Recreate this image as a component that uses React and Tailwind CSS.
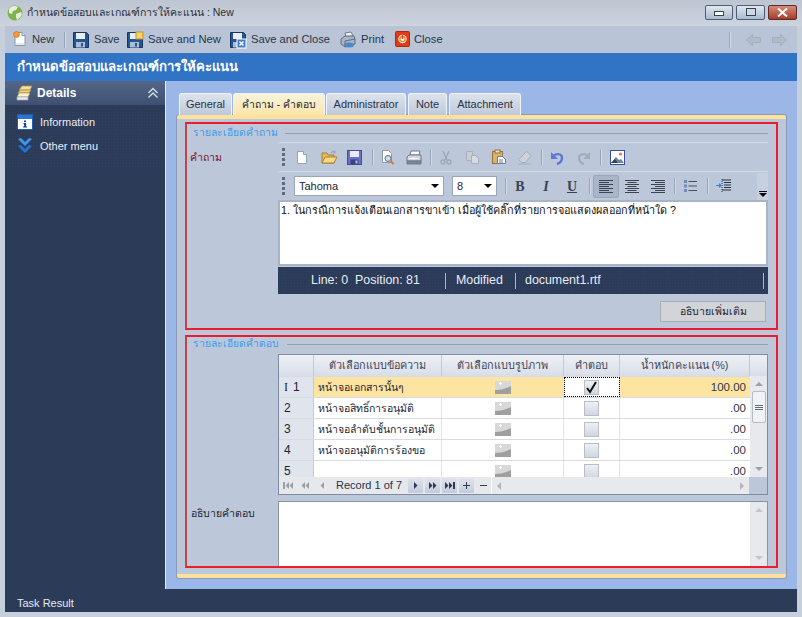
const font = "font-['Liberation_Sans','Noto_Sans',sans-serif]";

const Grip = () => (
  <div className="flex flex-col gap-[2px] w-[3px]">
    <div className="w-[3px] h-[3px] bg-[#5c6b82]" />
    <div className="w-[3px] h-[3px] bg-[#5c6b82]" />
    <div className="w-[3px] h-[3px] bg-[#5c6b82]" />
    <div className="w-[3px] h-[3px] bg-[#5c6b82]" />
  </div>
);

const Sep = ({ className = "" }) => <div className={`w-px h-[16px] bg-[#98a5b8] border-r border-[#d3dbe6] box-content ${className}`} />;

const Doc = ({ spark }) => (
  <svg width="16" height="16" viewBox="0 0 16 16">
    <path d="M3 1.5h7l3 3v10H3z" fill="#fff" stroke="#8d97a8" />
    <path d="M10 1.5v3h3" fill="#dfe5ee" stroke="#8d97a8" />
    <path d="M4 13h8" stroke="#cdd5e2" />
    {spark && <circle cx="4.5" cy="3.5" r="3" fill="#f29a3c" stroke="#d96a1d" strokeWidth=".6" />}
  </svg>
);

const Floppy = ({ badge }) => (
  <svg width="18" height="18" viewBox="0 0 18 18">
    <path d="M1.5 1.5h13l2 2v13h-15z" fill="#27558f" stroke="#17365f" />
    <rect x="4" y="2" width="9" height="6" fill="#e9eef5" />
    <rect x="4" y="11" width="9" height="5.5" fill="#a9bdd6" />
    <rect x="9" y="12" width="2" height="3.5" fill="#27558f" />
    {badge === "new" && <rect x="10" y="1" width="7" height="7" fill="#f6d266" stroke="#c9912c" />}
    {badge === "close" && (
      <g>
        <rect x="8" y="8" width="9" height="9" fill="#3d7dc8" stroke="#fff" />
        <path d="M10.5 10.5l4 4m0-4l-4 4" stroke="#fff" strokeWidth="1.6" />
      </g>
    )}
  </svg>
);

const PrinterBig = () => (
  <svg width="18" height="18" viewBox="0 0 18 18">
    <path d="M6 2l6-1 2 4-7 1z" fill="#f2f5f9" stroke="#6f7c8f" />
    <path d="M2 8l4-3h9l1 3v5l-10 3-4-3z" fill="#aab5c5" stroke="#5f6b7d" />
    <path d="M6 16V10l10-2" fill="none" stroke="#5f6b7d" />
    <ellipse cx="10" cy="14" rx="5" ry="2.5" fill="#4a88c7" />
  </svg>
);

const PowerClose = () => (
  <svg width="15" height="16" viewBox="0 0 15 16">
    <rect x="0.5" y="0.5" width="14" height="15" rx="1" fill="#e03a17" stroke="#b5280c" />
    <circle cx="7.5" cy="8" r="4.2" fill="#fff" />
    <circle cx="7.5" cy="8" r="2.6" fill="none" stroke="#e8832a" strokeWidth="1.4" />
    <path d="M7.5 4v4" stroke="#e03a17" strokeWidth="1.4" />
  </svg>
);

const Globe = () => (
  <svg width="16" height="16" viewBox="0 0 16 16">
    <circle cx="8" cy="8" r="7.5" fill="#7fb24a" />
    <path d="M2 4c2-3 6-4 9-2l-2 3-3 1-1 3-3-1zM9 9l5-2 1 2c-1 3-3 5-5 6l-1-3z" fill="#e6efdb" />
  </svg>
);

const Chest = () => (
  <svg width="18" height="18" viewBox="0 0 18 18">
    <path d="M3 6l3-4h10l-2 4z" fill="#f6e09a" stroke="#a4905a" strokeWidth=".7" />
    <path d="M2 9l2-3h11l-2 3z" fill="#f1cf6d" stroke="#a4905a" strokeWidth=".7" />
    <path d="M1 13l2-4h11l-2 4z" fill="#fbf3cf" stroke="#a4905a" strokeWidth=".7" />
    <path d="M1 13h11v3H1z" fill="#e9edf3" stroke="#a0a8b5" strokeWidth=".7" />
  </svg>
);

const InfoIcon = () => (
  <svg width="16" height="16" viewBox="0 0 16 16">
    <rect x="0.5" y="0.5" width="15" height="15" fill="#fff" stroke="#1e5fb0" />
    <rect x="1" y="1" width="14" height="4" fill="#2a74cf" />
    <rect x="7" y="6.5" width="2" height="1.6" fill="#163f86" />
    <path d="M6.5 9h2.6v3.4h1v1h-4v-1h1v-2.4h-.6z" fill="#163f86" />
  </svg>
);

const DoubleDown = () => (
  <svg width="16" height="16" viewBox="0 0 16 16">
    <path d="M1 1l3-1 4 4 4-4 3 1-7 7z" fill="#3f97ee" />
    <path d="M1 8l3-1 4 4 4-4 3 1-7 7z" fill="#1f73d6" />
  </svg>
);

const DoubleUp = () => (
  <svg width="12" height="12" viewBox="0 0 12 12" fill="none" stroke="#d6deea" strokeWidth="1.4">
    <path d="M1.5 6l4.5-4.5 4.5 4.5" />
    <path d="M1.5 10.5l4.5-4.5 4.5 4.5" />
  </svg>
);

const Small = {
  doc: (
    <svg width="14" height="15" viewBox="0 0 14 15">
      <path d="M2.5 1.5h6l3 3v9h-9z" fill="#fff" stroke="#9aa3b2" />
      <path d="M8.5 1.5v3h3" fill="#d9dfe8" stroke="#9aa3b2" />
    </svg>
  ),
  open: (
    <svg width="17" height="15" viewBox="0 0 17 15">
      <path d="M1 3h5l1 2h6v8H1z" fill="#e6bb5e" stroke="#a87f2d" />
      <path d="M1 13l3-6h12l-3 6z" fill="#f6d98a" stroke="#a87f2d" />
      <path d="M10 3c1-2 3-2 4-1M14 0.5V3h-2" fill="none" stroke="#8fa3bd" />
    </svg>
  ),
  save: (
    <svg width="15" height="15" viewBox="0 0 15 15">
      <rect x="0.5" y="0.5" width="14" height="14" fill="#6a72c6" stroke="#454c97" />
      <rect x="3" y="1" width="9" height="6" fill="#e8ecf6" />
      <rect x="3.5" y="9.5" width="8" height="5" fill="#3b4284" />
      <rect x="8.5" y="10.5" width="2" height="3" fill="#b5bbe4" />
    </svg>
  ),
  preview: (
    <svg width="16" height="16" viewBox="0 0 16 16">
      <path d="M2.5 1.5h6l3 3v9h-9z" fill="#fff" stroke="#8f99a8" />
      <circle cx="8" cy="9.5" r="3" fill="#cfe0f1" stroke="#5f6b7d" />
      <path d="M10.5 12l3 3" stroke="#d27a2c" strokeWidth="2" />
    </svg>
  ),
  print: (
    <svg width="16" height="15" viewBox="0 0 16 15">
      <path d="M5 1h9l-1 4H4z" fill="#fff" stroke="#6e7786" />
      <path d="M1 7l2-2h12v6H1z" fill="#d3d8df" stroke="#6e7786" />
      <path d="M1 11h14v3H1z" fill="#7f8896" stroke="#6e7786" />
      <path d="M3 8.5h9" stroke="#fff" />
    </svg>
  ),
  cut: (
    <svg width="14" height="15" viewBox="0 0 14 15" fill="none" stroke="#9da6b3" strokeWidth="1.3">
      <path d="M4 1l4 9M10 1L6 10" />
      <circle cx="4" cy="12" r="2" />
      <circle cx="10" cy="12" r="2" />
    </svg>
  ),
  copy: (
    <svg width="15" height="15" viewBox="0 0 15 15">
      <path d="M1.5 1.5h6v9h-6z" fill="#c9ced6" stroke="#a9b0bb" />
      <path d="M6.5 5.5h4l3 3v5h-7z" fill="#d7dbe1" stroke="#a9b0bb" />
    </svg>
  ),
  paste: (
    <svg width="16" height="16" viewBox="0 0 16 16">
      <rect x="1.5" y="2.5" width="10" height="12" fill="#d9b46a" stroke="#92733a" />
      <rect x="4" y="1" width="5" height="3" fill="#e8e2cf" stroke="#92733a" />
      <path d="M6.5 7.5h5l3 3v4h-8z" fill="#fff" stroke="#6f7c8f" />
      <path d="M8 11h4M8 13h4" stroke="#6f7c8f" />
    </svg>
  ),
  eraser: (
    <svg width="16" height="15" viewBox="0 0 16 15">
      <path d="M9.5 1.5l5 4-6 7h-4l-3-3z" fill="#cdd2d9" stroke="#a6adb8" />
      <path d="M1 14h13" stroke="#a6adb8" />
    </svg>
  ),
  undo: (
    <svg width="14" height="15" viewBox="0 0 14 15" fill="none">
      <path d="M3 7c2-4 9-4 9 1 0 3-2 5-5 6" stroke="#5c78d6" strokeWidth="2.4" />
      <path d="M1 2v7h7z" fill="#5c78d6" />
    </svg>
  ),
  redo: (
    <svg width="14" height="15" viewBox="0 0 14 15" fill="none">
      <path d="M11 7C9 3 2 3 2 8c0 3 2 5 5 6" stroke="#a3acb9" strokeWidth="2.4" />
      <path d="M13 2v7H6z" fill="#a3acb9" />
    </svg>
  ),
  image: (
    <svg width="15" height="15" viewBox="0 0 15 15">
      <rect x="0.5" y="0.5" width="14" height="14" fill="#fff" stroke="#3c4f9b" />
      <circle cx="10.5" cy="4" r="1.6" fill="#ec7b35" />
      <path d="M1 13l5-6 3 3 2-1 3 4z" fill="#6d83a8" />
      <path d="M1 13l4-4 3 4z" fill="#33415f" />
    </svg>
  ),
  list: (
    <svg width="14" height="14" viewBox="0 0 14 14">
      <rect x="1" y="1" width="3" height="3" fill="#7487b8" />
      <rect x="1" y="5.5" width="3" height="3" fill="#7487b8" />
      <rect x="1" y="10" width="3" height="3" fill="#7487b8" />
      <path d="M5.5 2.5H14M5.5 7H14M5.5 11.5H14" stroke="#4a5361" />
    </svg>
  ),
  indent: (
    <svg width="16" height="14" viewBox="0 0 16 14">
      <path d="M6 1h9M8 3.500h7M8 6h7M8 8.500h7M6 11h9" stroke="#2b3340" />
      <path d="M6 0v14" stroke="#2b3340" strokeDasharray="1 1" />
      <path d="M0 6h3V4l3 2.500L3 9V7H0z" fill="#3c7fdc" />
    </svg>
  ),
};

const Align = ({ kind }) => {
  const short = { left: ["M0 3.500h10", "M0 7.500h10", "M0 11.500h10"], center: ["M2.500 3.500h9", "M2.500 7.500h9", "M2.500 11.500h9"], right: ["M4 3.500h10", "M4 7.500h10", "M4 11.500h10"] }[kind];
  return (
    <svg width="14" height="14" viewBox="0 0 14 14" stroke="#3c434f">
      <path d="M0 1.500h14M0 5.500h14M0 9.500h14M0 13.500h14" />
      {short.map((d) => (
        <path key={d} d={d} />
      ))}
    </svg>
  );
};

const Caret = ({ className = "" }) => (
  <div className={`w-0 h-0 border-x-[4px] border-x-transparent border-t-[4px] border-t-black ${className}`} />
);

const ToolItem = ({ icon, label, labelClass = "", className = "" }) => (
  <div className={`flex items-center gap-[4px] text-[11.200px] text-[#27344a] ${className}`}>
    {icon}
    <span className={`whitespace-nowrap ${labelClass}`}>{label}</span>
  </div>
);

const Tab = ({ label, active, className = "" }) => (
  <div
    className={`h-[22px] flex items-center justify-center rounded-t-[3px] border border-b-0 border-[#f0f4fa] ${
      active ? "bg-gradient-to-b from-[#f7f3dd] to-[#fde5a6] text-[#1c2534]" : "bg-gradient-to-b from-[#dde3ec] to-[#bfc9d9] text-[#27344a]"
    } ${className}`}
  >
    {label}
  </div>
);

const PicCell = () => (
  <svg width="16" height="13" viewBox="0 0 16 13">
    <rect width="16" height="13" fill="#d8d8d8" />
    <path d="M0 13V9c5 0 11-1 16-4v8z" fill="#9f9f9f" />
    <rect x="4" y="2" width="3" height="1" fill="#fff" />
    <rect x="5" y="1" width="1" height="3" fill="#fff" />
  </svg>
);

const Check = ({ checked }) => (
  <div className="w-[15px] h-[15px] border border-[#b9bec6] bg-gradient-to-b from-[#eef0f4] to-[#cfd6e3] flex items-center justify-center">
    {checked && (
      <svg width="13" height="13" viewBox="0 0 13 13" fill="none" stroke="#111" strokeWidth="2">
        <path d="M2 7l3 4 6-10" />
      </svg>
    )}
  </div>
);

const rows = [
  { no: "1", text: "หน้าจอเอกสารนั้นๆ", score: "100.00", on: true },
  { no: "2", text: "หน้าจอสิทธิ์การอนุมัติ", score: ".00" },
  { no: "3", text: "หน้าจอลำดับชั้นการอนุมัติ", score: ".00" },
  { no: "4", text: "หน้าจออนุมัติการร้องขอ", score: ".00" },
  { no: "5", text: "", score: ".00" },
];

const NavBtn = ({ d, active, dark, className = "" }) => (
  <div className={`h-[15px] flex items-center justify-center rounded-[1px] ${active ? "w-[15px] bg-gradient-to-b from-[#dfe3ec] to-[#c3cbdc]" : "w-[16px] bg-[#e6e8eb]"} ${className}`}>
    <svg width="11" height="7" viewBox="0 0 11 7" fill={active || dark ? "#2f3a52" : "#9aa0a8"}>
      <path d={d} />
    </svg>
  </div>
);

export default function App() {
  return (
    <div className={`w-[802px] h-[617px] overflow-hidden flex flex-col bg-[#c6cfdc] ${font}`}>
      {/* title bar */}
      <div className="h-[26px] flex items-center pl-[7px] pr-[5px] bg-gradient-to-b from-[#bcc5d1] to-[#cdd4de]">
        <Globe />
        <span className="ml-[4px] text-[10.500px] text-[#2a2f38]">กำหนดข้อสอบและเกณฑ์การให้คะแนน : New</span>
        <div className="ml-auto flex gap-[3px] -mt-[2px]">
          <div className="w-[28px] h-[15px] rounded-[2px] border border-[#4f5d72] bg-gradient-to-b from-[#e0e7f0] to-[#a9bad0] flex items-center justify-center">
            <div className="w-[10px] h-[5px] mt-[2px] border border-[#3a4250] bg-white" />
          </div>
          <div className="w-[29px] h-[15px] rounded-[2px] border border-[#4f5d72] bg-gradient-to-b from-[#e0e7f0] to-[#a9bad0] flex items-center justify-center">
            <div className="w-[10px] h-[8px] border border-[#3a4250] bg-[#cfd9e6]" />
          </div>
          <div className="w-[29px] h-[15px] rounded-[2px] border border-[#5c2a2a] bg-gradient-to-b from-[#d48a78] to-[#a8392b] flex items-center justify-center">
            <svg width="11" height="9" viewBox="0 0 11 9" fill="none" stroke="#fff" strokeWidth="2">
              <path d="M1 0.500l9 8m0-8l-9 8" />
            </svg>
          </div>
        </div>
      </div>

      <div className="ml-[5px] mr-[5px] flex flex-col">
        {/* main toolbar */}
        <div className="h-[27px] flex items-center pl-[7px] bg-[#b9c5d6]">
          <ToolItem icon={<Doc spark />} label="New" labelClass="w-[24px]" />
          <Sep className="ml-[8px]" />
          <ToolItem icon={<Floppy />} label="Save" labelClass="w-[24px]" className="ml-[6px]" />
          <ToolItem icon={<Floppy badge="new" />} label="Save and New" labelClass="w-[74px]" className="ml-[8px]" />
          <ToolItem icon={<Floppy badge="close" />} label="Save and Close" labelClass="w-[79px]" className="ml-[7px]" />
          <ToolItem icon={<PrinterBig />} label="Print" labelClass="w-[24px]" className="ml-[9px]" />
          <ToolItem icon={<PowerClose />} label="Close" labelClass="w-[29px]" className="ml-[10px]" />
          <div className="ml-auto flex items-center gap-[10px] pr-[10px]">
            <Sep />
            <svg width="15" height="12" viewBox="0 0 15 12" className="ml-[5px]">
              <path d="M0.500 6L6.500 0.500v3h8v5h-8v3z" fill="#b0bac8" stroke="#a3adbc" />
            </svg>
            <svg width="15" height="12" viewBox="0 0 15 12" className="ml-[1px]">
              <path d="M14.500 6L8.500 0.500v3h-8v5h8v3z" fill="#b0bac8" stroke="#a3adbc" />
            </svg>
          </div>
        </div>

        {/* blue header */}
        <div className="h-[28px] flex items-center pl-[12px] bg-[#3173c4] text-[13.200px] font-bold text-white">กำหนดข้อสอบและเกณฑ์การให้คะแนน</div>

        <div className="h-[508px] flex">
          {/* sidebar */}
          <div className="w-[160px] bg-[#2c3b58] flex flex-col">
            <div className="h-[24px] flex items-center pl-[11px] pr-[6px] bg-gradient-to-b from-[#536688] to-[#3f5173]">
              <Chest />
              <span className="ml-[3px] text-[12px] font-bold text-white">Details</span>
              <div className="ml-auto"><DoubleUp /></div>
            </div>
            <div className="h-[63px] flex flex-col gap-[8px] pt-[9px] pl-[12px] bg-[radial-gradient(#334262_1px,transparent_1px)] bg-[length:3px_3px] text-[11px] text-[#e8edf5]">
              <div className="flex items-center h-[16px] gap-[7px]"><InfoIcon /><span>Information</span></div>
              <div className="flex items-center h-[16px] gap-[7px]"><DoubleDown /><span>Other menu</span></div>
            </div>
          </div>

          {/* content */}
          <div className="w-[632px] bg-[#9bb7e8] border-l border-[#e6edf8] pt-[12px] pl-[11px] pr-[11px]">
            <div className="flex pl-[2px] text-[11px]">
              <Tab label="General" className="w-[53px]" />
              <Tab label="คำถาม - คำตอบ" active className="w-[92px] ml-px text-[10.300px]" />
              <Tab label="Administrator" className="w-[80px] ml-px" />
              <Tab label="Note" className="w-[39px] ml-[2px]" />
              <Tab label="Attachment" className="w-[72px] ml-[2px]" />
            </div>

            <div className="w-[609px] h-[463px] rounded-[2px] bg-[#bcc8d9] border-t-[4px] border-b-[4px] border-[#fde29d] shadow-[0_0_0_1px_#8a9ab5] px-[8px] pt-[3px]">
              {/* question box */}
              <div className="h-[208px] border-2 border-[#ec1c2c] border-l-[#c5404f]">
                <div className="flex items-center h-[18px] pl-[6px] pr-[8px]">
                  <span className="text-[10.300px] text-[#3d9af0]">รายละเอียดคำถาม</span>
                  <div className="flex-1 h-px bg-[#999fa8] ml-[7px]" />
                </div>
                <div className="flex">
                  <div className="w-[91px] pl-[3px] pt-[8px] text-[10.500px] text-[#7d1420]">คำถาม</div>
                  <div className="w-[490px] flex flex-col">
                    <div className="h-[29px] flex items-center pl-[4px] border-t border-[#d3dbe6] rounded-l-[3px] bg-[#bcc8d9]">
                      <Grip />
                      <div className="ml-[10px] flex items-center"><span className="w-[26px]">{Small.doc}</span><span className="w-[26px]">{Small.open}</span><span className="w-[25px]">{Small.save}</span></div>
                      <Sep />
                      <div className="ml-[6px] flex items-center"><span className="w-[26px]">{Small.preview}</span><span className="w-[24px]">{Small.print}</span></div>
                      <Sep />
                      <div className="ml-[7px] flex items-center"><span className="w-[26px]">{Small.cut}</span><span className="w-[26px]">{Small.copy}</span><span className="w-[26px]">{Small.paste}</span><span className="w-[24px]">{Small.eraser}</span></div>
                      <Sep />
                      <div className="ml-[7px] flex items-center"><span className="w-[27px]">{Small.undo}</span><span className="w-[23px]">{Small.redo}</span></div>
                      <Sep />
                      <div className="ml-[8px]">{Small.image}</div>
                    </div>
                    <div className="h-[29px] flex items-center pl-[4px] border-t border-[#d3dbe6] rounded-l-[3px]">
                      <Grip />
                      <div className="ml-[9px] w-[150px] h-[20px] flex items-center justify-between px-[4px] bg-white border border-[#9aa6b8] text-[11px] text-[#1c2534]">Tahoma<Caret /></div>
                      <div className="ml-[8px] w-[45px] h-[20px] flex items-center justify-between px-[4px] bg-white border border-[#9aa6b8] text-[11px] text-[#1c2534]">8<Caret /></div>
                      <Sep className="ml-[8px]" />
                      <div className="w-[26px] text-center font-['Liberation_Serif',serif] font-bold text-[14px] text-[#3a4250]">B</div>
                      <div className="w-[26px] text-center font-['Liberation_Serif',serif] font-bold italic text-[14px] text-[#3a4250]">I</div>
                      <div className="w-[26px] text-center font-['Liberation_Serif',serif] font-bold underline text-[14px] text-[#3a4250]">U</div>
                      <Sep className="ml-[4px]" />
                      <div className="ml-[2px] w-[26px] h-[23px] flex items-center justify-center bg-[#a9b6c9] border border-[#9aa7ba] rounded-[2px]"><Align kind="left" /></div>
                      <div className="w-[26px] flex justify-center"><Align kind="center" /></div>
                      <div className="w-[26px] flex justify-center"><Align kind="right" /></div>
                      <Sep className="ml-[3px]" />
                      <div className="w-[28px] flex justify-center">{Small.list}</div>
                      <Sep className="ml-[3px]" />
                      <div className="w-[30px] flex justify-center">{Small.indent}</div>
                      <div className="ml-auto w-[11px] h-[27px] flex flex-col items-center justify-end pb-[3px] gap-[1px] bg-[#c6d0de]">
                        <div className="w-[8px] h-px bg-black" />
                        <Caret />
                      </div>
                    </div>
                    <div className="h-[66px] bg-white border-2 border-[#a9b5c7] px-[1px] text-[10.800px] leading-[16px] text-[#111]">1. ในกรณีการแจ้งเตือนเอกสารขาเข้า เมื่อผู้ใช้คลิ๊กที่รายการจอแสดงผลออกที่หน้าใด ?</div>
                    <div className="h-[27px] mt-px flex items-center bg-[#2c3b58] bg-[radial-gradient(#334262_1px,transparent_1px)] bg-[length:3px_3px] text-[12.400px] text-[#e8edf5]">
                      <span className="ml-[33px] w-[134px]">Line: 0&nbsp; Position: 81</span>
                      <div className="w-px h-[16px] bg-[#aab5c7]" />
                      <span className="ml-[10px] w-[59px]">Modified</span>
                      <div className="w-px h-[16px] bg-[#aab5c7]" />
                      <span className="ml-[9px] w-[238px]">document1.rtf</span>
                      <div className="w-px h-[16px] bg-[#aab5c7]" />
                    </div>
                    <div className="flex justify-end pt-[7px] pr-[2px]">
                      <div className="w-[106px] h-[21px] flex items-center justify-center bg-[#d2d4d8] border border-[#a9adb3] text-[10.500px] text-[#1c2534]">อธิบายเพิ่มเติม</div>
                    </div>
                  </div>
                </div>
              </div>

              {/* answer box */}
              <div className="h-[233px] mt-[5px] border-2 border-[#ec1c2c] border-l-[#c5404f]">
                <div className="flex items-center h-[14px] pl-[6px] pr-[8px]">
                  <span className="text-[10.300px] text-[#3d9af0]">รายละเอียดคำตอบ</span>
                  <div className="flex-1 h-px bg-[#999fa8] ml-[8px]" />
                </div>
                <div className="ml-[91px] w-[490px] h-[141px] mt-[3px] border border-[#808ea3] bg-white flex flex-col">
                  <div className="h-[21px] grid grid-cols-[35px_128px_122px_56px_130px_17px] text-[10.800px] text-[#3b4658] text-center bg-gradient-to-b from-[#eef0f4] to-[#d8dee9]">
                    <div className="border-r border-[#c2cad8]" />
                    <div className="border-r border-[#c2cad8] leading-[21px]">ตัวเลือกแบบข้อความ</div>
                    <div className="border-r border-[#c2cad8] leading-[21px]">ตัวเลือกแบบรูปภาพ</div>
                    <div className="border-r border-[#c2cad8] leading-[21px]">คำตอบ</div>
                    <div className="border-r border-[#c2cad8] leading-[21px]">น้ำหนักคะแนน (%)</div>
                    <div />
                  </div>
                  <div className="h-[101px] flex overflow-hidden">
                    <div className="w-[471px] flex flex-col">
                      {rows.map((r) => (
                        <div key={r.no} className={`h-[21px] shrink-0 grid grid-cols-[35px_128px_122px_56px_130px] border-t border-[#d6dbe6] text-[10.500px] text-[#1c2534] ${r.on ? "bg-[#fde4a0]" : "bg-white"}`}>
                          <div className="bg-[#e0e4ec] border-r border-[#c2cad8] flex items-center pl-[5px] text-[12px]">
                            {r.on && <span className="w-[9px] font-['Liberation_Serif',serif]">I</span>}
                            <span>{r.no}</span>
                          </div>
                          <div className="border-r border-[#dfe3ec] pl-[4px] leading-[20px] whitespace-nowrap overflow-hidden">{r.text}</div>
                          <div className="border-r border-[#dfe3ec] flex items-center justify-center"><PicCell /></div>
                          <div className={`border-r border-[#dfe3ec] flex items-center justify-center ${r.on ? "bg-white outline-1 -outline-offset-1 outline-dotted outline-black" : ""}`}><Check checked={r.on} /></div>
                          <div className="text-right pr-[4px] leading-[20px] text-[11.500px] text-[#2d3646]">{r.score}</div>
                        </div>
                      ))}
                    </div>
                    <div className="w-[17px] bg-[#e7e9ec] flex flex-col items-center relative">
                      <div className="mt-[6px] w-0 h-0 border-x-[4px] border-x-transparent border-b-[4px] border-b-[#9aa0a8]" />
                      <div className="mt-[5px] w-[14px] h-[32px] rounded-[2px] border border-[#b4bcc9] bg-[#f0f2f5] flex flex-col items-center justify-center gap-[1px]">
                        <div className="w-[8px] h-px bg-[#606a7a]" />
                        <div className="w-[8px] h-px bg-[#606a7a]" />
                        <div className="w-[8px] h-px bg-[#606a7a]" />
                      </div>
                      <div className="mt-auto mb-[6px] w-0 h-0 border-x-[4px] border-x-transparent border-t-[4px] border-t-[#9aa0a8]" />
                    </div>
                  </div>
                  <div className="h-[17px] flex items-center pl-px bg-[#e6e8eb] text-[11px] text-[#27344a]">
                    <NavBtn d="M0 0h2v7H0zM6 0v7L2.500 3.500zM10 0v7L6.500 3.500z" />
                    <NavBtn d="M5 0v7L1.500 3.500zM9 0v7L5.500 3.500z" className="ml-px" />
                    <NavBtn d="M7 0v7L3.500 3.500z" className="ml-px" />
                    <span className="ml-[6px] w-[72px] whitespace-nowrap">Record 1 of 7</span>
                    <NavBtn active d="M4 0v7l3.500-3.500z" />
                    <NavBtn active d="M2 0v7l3.500-3.500zM6 0v7l3.500-3.500z" className="ml-[2px]" />
                    <NavBtn active d="M1 0v7l3.500-3.500zM5 0v7l3.500-3.500zM9 0h2v7H9z" className="ml-[2px]" />
                    <NavBtn active d="M5 0h1v3h3v1H6v3H5V4H2V3h3z" className="ml-[2px]" />
                    <NavBtn dark d="M2 3h7v1H2z" className="ml-px" />
                    <div className="w-[258px] h-[17px] flex items-center justify-between px-[5px] bg-[#e7e9ec] border-l border-white">
                      <div className="w-0 h-0 border-y-[4px] border-y-transparent border-r-[4px] border-r-[#b3b8bf]" />
                      <div className="w-0 h-0 border-y-[4px] border-y-transparent border-l-[4px] border-l-[#b3b8bf]" />
                    </div>
                    <div className="flex-1 h-[17px] bg-[#bcc8d9]" />
                  </div>
                </div>
                <div className="flex mt-[6px]">
                  <div className="w-[91px] pl-[4px] pt-[5px] text-[10.500px] text-[#1c2534]">อธิบายคำตอบ</div>
                  <div className="w-[490px] h-[65px] border-t border-l border-r border-[#8795aa] bg-white flex justify-end">
                    <div className="w-[17px] bg-[#e7e9ec] flex flex-col items-center justify-between py-[6px]">
                      <div className="w-0 h-0 border-x-[4px] border-x-transparent border-b-[4px] border-b-[#c2c6cb]" />
                      <div className="w-0 h-0 border-x-[4px] border-x-transparent border-t-[4px] border-t-[#c2c6cb]" />
                    </div>
                  </div>
                </div>
              </div>
            </div>
          </div>
        </div>

        {/* footer */}
        <div className="h-[23px] flex items-center pl-[12px] pt-[5px] bg-[#2c3b58] text-[11px] text-[#e3e8f0]">Task Result</div>
      </div>
    </div>
  );
}
